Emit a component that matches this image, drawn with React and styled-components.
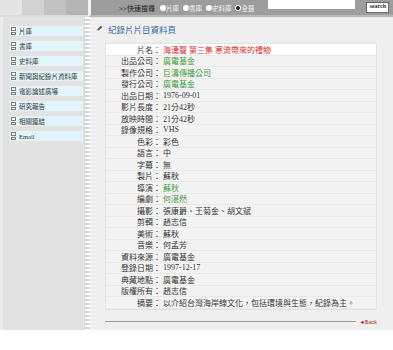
import React from 'react';
import styled, { createGlobalStyle } from 'styled-components';

const GlobalStyle = createGlobalStyle`
  body {
    margin: 0;
    background: #ffffff;
    font-family: "Liberation Sans", "Noto Sans CJK TC", sans-serif;
  }
`;

const CJK = `"Liberation Serif", "Noto Sans CJK TC", serif`;

const menu = ['片庫', '書庫', '史料庫', '新聞與紀錄片資料庫', '電影論述廣場', '研究報告', '相關連結', 'Email'];

const rows = [
  { label: '片名', value: '海湧聲 第三集 寒流帶來的禮物', tone: 'red', first: true },
  { label: '出品公司', value: '廣電基金', tone: 'green' },
  { label: '製作公司', value: '巨濤傳播公司', tone: 'green' },
  { label: '發行公司', value: '廣電基金', tone: 'green' },
  { label: '出品日期', value: '1976-09-01' },
  { label: '影片長度', value: '21分42秒' },
  { label: '放映時間', value: '21分42秒' },
  { label: '錄像規格', value: 'VHS' },
  { label: '色彩', value: '彩色' },
  { label: '語言', value: '中' },
  { label: '字幕', value: '無' },
  { label: '製片', value: '蘇秋' },
  { label: '導演', value: '蘇秋', tone: 'green' },
  { label: '編劇', value: '何湛然', tone: 'green' },
  { label: '攝影', value: '張康爵、王菊金、胡文斌' },
  { label: '剪輯', value: '趙志信' },
  { label: '美術', value: '蘇秋' },
  { label: '音樂', value: '何孟芳' },
  { label: '資料來源', value: '廣電基金' },
  { label: '登錄日期', value: '1997-12-17' },
  { label: '典藏地點', value: '廣電基金' },
  { label: '版權所有', value: '趙志信' },
  { label: '摘要', value: '以介紹台灣海岸線文化，包括環境與生態，紀錄為主。' },
];

const tones = { red: '#d0282c', green: '#3c9a3c' };

const Page = styled.div`
  width: 393px;
`;

const Top = styled.div`
  display: flex;
  height: 17px;
`;

const Corner = styled.div`
  width: 88px;
  flex-shrink: 0;
  display: flex;
  background: #dcdcdc;
`;

const Step = styled.div`
  flex: 1;
  height: 15px;
  background: ${(p) => p.$shade};
`;

const SearchBar = styled.div`
  flex: 1;
  min-width: 0;
  display: flex;
  align-items: flex-start;
  background: #9d9d9d;
  border-left: 3px solid #f2f2f2;
  border-bottom: 2px solid #b9b9b9;
`;

const Quick = styled.span`
  margin: 3px 0 0 28px;
  font: 7px ${CJK};
  color: #222;
  white-space: nowrap;
`;

const Radios = styled.div`
  display: flex;
  gap: 5px;
  margin: 3px 0 0 6px;
`;

const Radio = styled.span`
  display: flex;
  align-items: center;
  gap: 1px;
  font: 6.5px ${CJK};
  color: #f4f4f4;
  white-space: nowrap;
  &::before {
    content: '';
    width: 4px;
    height: 4px;
    border-radius: 50%;
    background: ${(p) => (p.$on ? '#222' : '#fff')};
    box-shadow: 0 0 0 1px #fff;
  }
`;

const Field = styled.div`
  width: 87px;
  height: 9px;
  flex-shrink: 0;
  margin-left: auto;
  background: #ffffff;
`;

const Go = styled.span`
  margin: 2px 4px 0 11px;
  padding: 0 2px;
  height: 9px;
  line-height: 9px;
  font: bold 6px "Liberation Serif", serif;
  color: #333;
  background: #fff;
  border: 1px solid #666;
`;

const Body = styled.div`
  display: flex;
  height: 313px;
`;

const Sidebar = styled.nav`
  width: 84px;
  flex-shrink: 0;
  padding: 9px 0 0 7px;
  display: flex;
  flex-direction: column;
  gap: 5px;
  background: #e2e2e2;
  border-left: 3px solid #ececec;
  box-sizing: border-box;
`;

const Item = styled.div`
  width: 73px;
  height: 10px;
  display: flex;
  align-items: center;
  gap: 3px;
  background: #e2f5fb;
  font: 6.5px ${CJK};
  color: #333;
  white-space: nowrap;
`;

const ItemIcon = styled.span`
  width: 5px;
  height: 8px;
  display: flex;
  flex-direction: column;
  gap: 1px;
  margin-left: 1px;
  &::before,
  &::after {
    content: '';
    flex: 1;
    border: 1px solid #7a7a7a;
    background: #fff;
  }
`;

const Perf = styled.div`
  width: 5px;
  flex-shrink: 0;
  background: repeating-linear-gradient(to bottom, #ffffff 0 2px, #d4d4d4 2px 4px);
  border-left: 1px solid #d8d8d8;
`;

const Main = styled.main`
  flex: 1;
  background: #efefef;
  padding: 5px 16px 0 6px;
  border-top: 1px solid #e4e4e4;
`;

const Title = styled.h1`
  margin: 0 0 9px;
  display: flex;
  align-items: center;
  gap: 5px;
  height: 11px;
  font: 8.5px ${CJK};
  color: #3a66a8;
`;

const Table = styled.div`
  margin-left: 9px;
  border: 1px solid #e2e2e2;
  background: #f3f3f3;
`;

const Row = styled.div`
  display: flex;
  height: 11.5px;
  align-items: center;
  background: ${(p) => (p.$first ? '#ffffff' : 'transparent')};
  border-bottom: 1px solid #e9e9e9;
  box-sizing: border-box;
  font: 8px ${CJK};
  white-space: nowrap;
`;

const Label = styled.span`
  width: 55px;
  text-align: right;
  color: #333;
`;

const Value = styled.span`
  margin-left: 2px;
  color: ${(p) => tones[p.$tone] || '#333'};
`;

const Foot = styled.div`
  display: flex;
  align-items: center;
  margin: 9px 0 0 9px;
  gap: 3px;
`;

const Rule = styled.div`
  flex: 1;
  height: 1px;
  background: #9a9a9a;
`;

const Back = styled.span`
  font: 5.5px "Liberation Sans", sans-serif;
  color: #b0282c;
`;

export default function App() {
  return (
    <Page>
      <GlobalStyle />
      <Top>
        <Corner>
          {['#e4e4e4', '#d2d2d2', '#c2c2c2', '#b4b4b4'].map((s) => (
            <Step key={s} $shade={s} />
          ))}
        </Corner>
        <SearchBar>
          <Quick>&gt;&gt;快速搜尋</Quick>
          <Radios>
            <Radio>片庫</Radio>
            <Radio>書庫</Radio>
            <Radio>史料庫</Radio>
            <Radio $on>全選</Radio>
          </Radios>
          <Field />
          <Go>search</Go>
        </SearchBar>
      </Top>
      <Body>
        <Sidebar>
          {menu.map((m) => (
            <Item key={m}>
              <ItemIcon />
              {m}
            </Item>
          ))}
        </Sidebar>
        <Perf />
        <Main>
          <Title>
            <svg width="7" height="7" viewBox="0 0 10 10">
              <path d="M1 9 L2 6 L7 1 L9 3 L4 8 Z" fill="#555" />
              <path d="M1 9 L2 6 L4 8 Z" fill="#ccc" />
            </svg>
            紀錄片片目資料頁
          </Title>
          <Table>
            {rows.map((r) => (
              <Row key={r.label} $first={r.first}>
                <Label>{r.label}：</Label>
                <Value $tone={r.tone}>{r.value}</Value>
              </Row>
            ))}
          </Table>
          <Foot>
            <Rule />
            <Back>◄Back</Back>
          </Foot>
        </Main>
      </Body>
    </Page>
  );
}
